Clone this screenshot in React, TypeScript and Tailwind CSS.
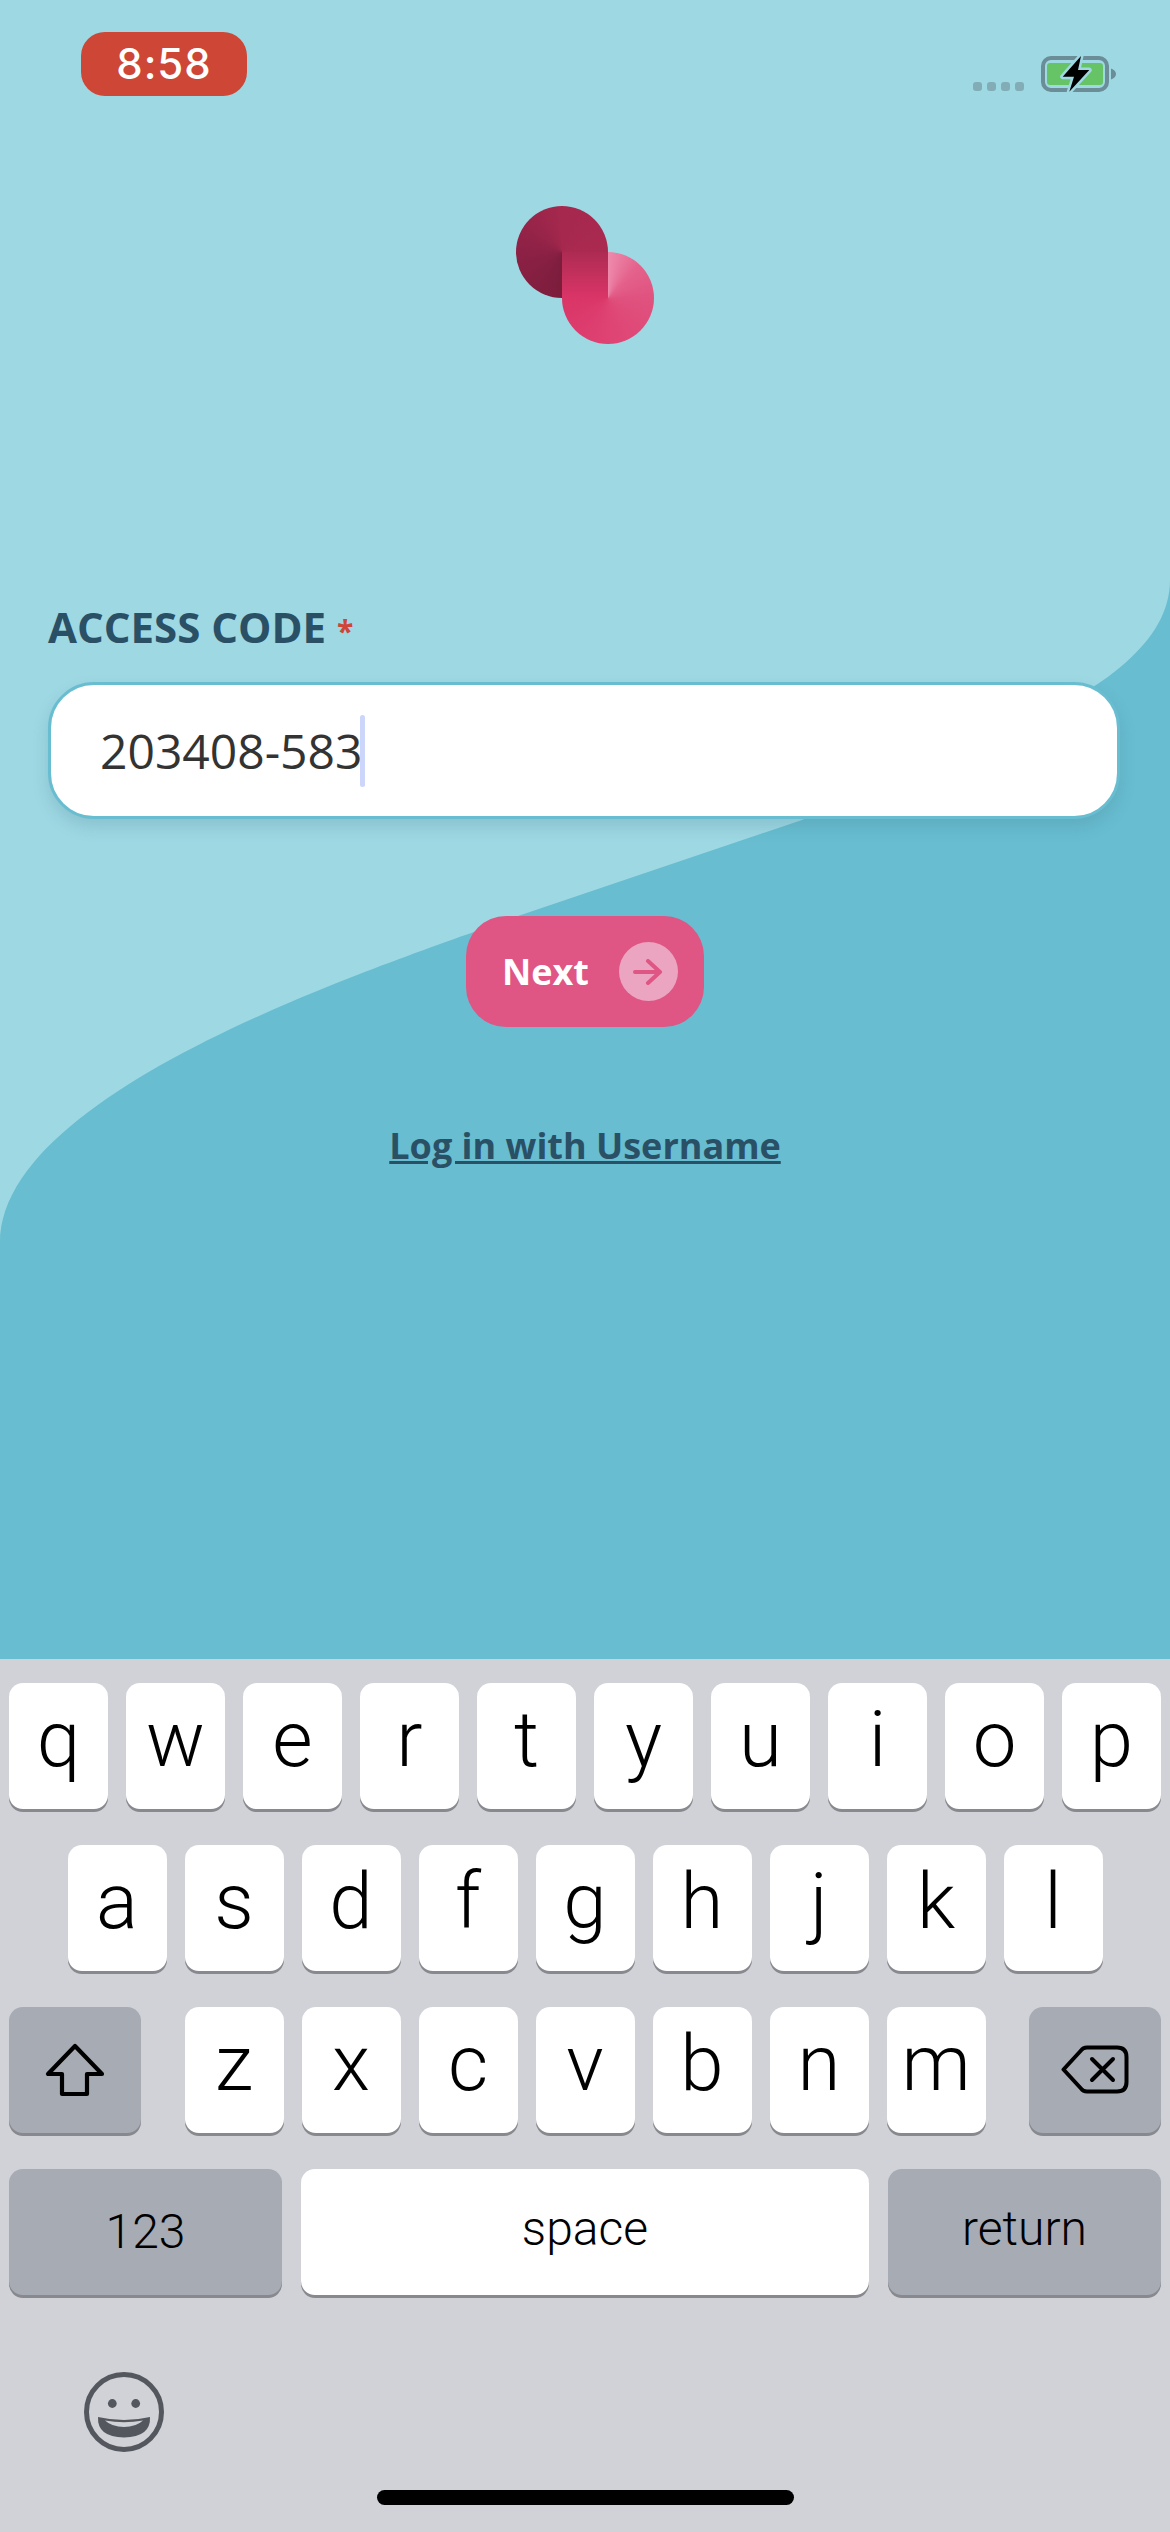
const ROW_1 = ['q', 'w', 'e', 'r', 't', 'y', 'u', 'i', 'o', 'p'];
const ROW_2 = ['a', 's', 'd', 'f', 'g', 'h', 'j', 'k', 'l'];
const ROW_3 = ['z', 'x', 'c', 'v', 'b', 'n', 'm'];

function Logo() {
  return (
    <svg width="138" height="138" viewBox="0 0 138 138">
      <defs>
        <clipPath id="left-disc">
          <circle cx="46" cy="46" r="46" />
        </clipPath>
        <clipPath id="right-disc">
          <circle cx="92" cy="92" r="46" />
        </clipPath>
        <linearGradient id="band" x1="0" y1="0" x2="0" y2="1">
          <stop offset="0" stopColor="#ad2b52" />
          <stop offset="1" stopColor="#db3568" />
        </linearGradient>
      </defs>
      <g clipPath="url(#left-disc)">
        <foreignObject x="0" y="0" width="92" height="92">
          <div className="h-[92px] w-[92px] bg-[conic-gradient(from_180deg,#7c1d3c,#8c2145_25%,#a6284e_50%,#ae2b52_100%)]" />
        </foreignObject>
      </g>
      <g clipPath="url(#right-disc)">
        <foreignObject x="46" y="46" width="92" height="92">
          <div className="h-[92px] w-[92px] bg-[conic-gradient(#ee8aac,#e4628c_12%,#e0527f_25%,#de4373_50%,#da3567_75%,#da3567_100%)]" />
        </foreignObject>
      </g>
      <path d="M46 46H92V92H46Z" fill="url(#band)" />
    </svg>
  );
}

function Battery() {
  return (
    <svg width="76" height="40" viewBox="0 0 76 40">
      <rect x="2" y="4" width="64" height="32" rx="8" fill="none" stroke="#6a8d98" strokeWidth="4" />
      <rect x="6" y="9" width="56" height="22" rx="3" fill="#66c466" />
      <path d="M70 14.5C73 15.5 75 17.5 75 20C75 22.5 73 24.5 70 25.5Z" fill="#6a8d98" />
      <path
        d="M40 2L21.7 22.7H33L28.3 37.7L48.3 16H37Z"
        fill="#000"
        stroke="#9ed8e3"
        strokeWidth="5"
        strokeLinejoin="round"
        paintOrder="stroke"
      />
    </svg>
  );
}

function Key({ label }: { label: string }) {
  return (
    <div className="flex h-[126px] w-[99px] items-center justify-center rounded-[14px] bg-white pb-[12px] font-['Roboto',sans-serif] text-[78px] font-[350] leading-none text-black shadow-[0_3px_0_#88898e]">
      {label}
    </div>
  );
}

function ShiftIcon() {
  return (
    <svg width="60" height="54" viewBox="0 0 60 54" fill="none" stroke="#000" strokeWidth="4.2" strokeLinejoin="round">
      <path d="M30 3L3 31H17V51H42V31H57Z" />
    </svg>
  );
}

function DeleteIcon() {
  return (
    <svg width="68" height="50" viewBox="0 0 68 50" fill="none" stroke="#000" strokeWidth="4" strokeLinecap="round" strokeLinejoin="round">
      <path d="M2.5 24.5L20 5.5Q22 2.5 26 2.5H56Q65.5 2.5 65.5 12V37Q65.5 46.5 56 46.5H26Q22 46.5 20 43.5Z" />
      <path d="M31 14L52 35M52 14L31 35" />
    </svg>
  );
}

function EmojiIcon() {
  return (
    <svg width="80" height="80" viewBox="0 0 80 80">
      <circle cx="40" cy="40" r="37.5" fill="none" stroke="#55575e" strokeWidth="5" />
      <circle cx="28.3" cy="31.5" r="4.4" fill="#55575e" />
      <circle cx="51.7" cy="31.5" r="4.4" fill="#55575e" />
      <path d="M14 45Q40 51 66 45Q67 65 40 65.5Q13 65 14 45Z" fill="#55575e" />
      <path d="M21 48.5Q40 52 59 48.5Q52 55 40 55Q28 55 21 48.5Z" fill="#d0d2d8" />
    </svg>
  );
}

function Keyboard() {
  return (
    <div className="flex h-[873px] flex-col bg-[#d0d2d8] pt-[24px]">
      <div className="flex flex-col gap-[36px]">
        <div className="flex justify-center gap-[18px]">
          {ROW_1.map((k) => (
            <Key key={k} label={k} />
          ))}
        </div>
        <div className="flex justify-center gap-[18px]">
          {ROW_2.map((k) => (
            <Key key={k} label={k} />
          ))}
        </div>
        <div className="flex justify-between px-[9px]">
          <div className="flex h-[126px] w-[132px] items-center justify-center rounded-[14px] bg-[#a7abb3] shadow-[0_3px_0_#88898e]">
            <ShiftIcon />
          </div>
          <div className="flex gap-[18px]">
            {ROW_3.map((k) => (
              <Key key={k} label={k} />
            ))}
          </div>
          <div className="flex h-[126px] w-[132px] items-center justify-center rounded-[14px] bg-[#a7abb3] shadow-[0_3px_0_#88898e]">
            <DeleteIcon />
          </div>
        </div>
        <div className="flex justify-between px-[9px] font-['Roboto',sans-serif] text-[48px] font-[350] leading-none text-black">
          <div className="flex h-[126px] w-[273px] items-center justify-center rounded-[14px] bg-[#a7abb3] shadow-[0_3px_0_#88898e]">
            123
          </div>
          <div className="flex h-[126px] w-[568px] items-center justify-center rounded-[14px] bg-white pb-[6px] shadow-[0_3px_0_#88898e]">
            space
          </div>
          <div className="flex h-[126px] w-[273px] items-center justify-center rounded-[14px] bg-[#a7abb3] pb-[6px] shadow-[0_3px_0_#88898e]">
            return
          </div>
        </div>
      </div>
      <div className="mt-[77px] pl-[84px]">
        <EmojiIcon />
      </div>
      <div className="mt-[38px] flex justify-center">
        <div className="h-[15px] w-[417px] rounded-full bg-black" />
      </div>
    </div>
  );
}

export default function App() {
  return (
    <div className="flex h-[2532px] w-[1170px] flex-col overflow-hidden bg-[#9ed8e3] font-['Open_Sans',sans-serif]">
      <div className="relative h-[1659px]">
        <svg className="absolute inset-0" width="1170" height="1659" viewBox="0 0 1170 1659">
          <path
            d="M1170 580C1170 690 960 750 802 820L518 916C400 960 0 1085 0 1243V1659H1170Z"
            fill="#68bdd0"
          />
        </svg>

        <div className="relative flex flex-col">
          <div className="flex items-start justify-between pt-[32px] pl-[81px] pr-[53px]">
            <div className="flex h-[64px] w-[166px] items-center justify-center rounded-[24px] bg-[#cd4636] font-['Inter',sans-serif] text-[42px] font-medium leading-none tracking-[1px] text-white">
              8:58
            </div>
            <div className="flex items-end gap-[17px] pt-[22px]">
              <div className="mb-[3px] flex gap-[5px]">
                <div className="h-[9px] w-[9px] rounded-[3px] bg-[#82adb7]" />
                <div className="h-[9px] w-[9px] rounded-[3px] bg-[#82adb7]" />
                <div className="h-[9px] w-[9px] rounded-[3px] bg-[#82adb7]" />
                <div className="h-[9px] w-[9px] rounded-[3px] bg-[#82adb7]" />
              </div>
              <Battery />
            </div>
          </div>

          <div className="mt-[110px] flex justify-center">
            <Logo />
          </div>

          <div className="mt-[256px] flex h-[54px] items-center pl-[48px] text-[42px] font-bold leading-none text-[#2a5066]">
            ACCESS CODE
            <span className="ml-[11px] mt-[8px] text-[30px] text-[#cd4636]">*</span>
          </div>

          <div className="mx-[48px] mt-[28px] flex h-[137px] w-[1072px] items-center rounded-[46px] border-[3px] border-[#68bdd0] bg-white pl-[49px] text-[48px] text-[#333] shadow-[0_8px_16px_rgba(60,110,130,0.2)]">
            203408-583
            <div className="-ml-[2px] h-[72px] w-[5px] rounded-full bg-[#ccd5fa]" />
          </div>

          <div className="mt-[97px] flex justify-center">
            <div className="flex h-[111px] w-[238px] items-center rounded-[40px] bg-[#df5583] pl-[36px] text-[36px] font-bold leading-none text-white">
              Next
              <div className="ml-[30px] flex h-[59px] w-[59px] items-center justify-center rounded-full bg-[#eca5c0]">
                <svg width="30" height="26" viewBox="0 0 30 26" fill="none" stroke="#df5583" strokeWidth="4" strokeLinecap="round" strokeLinejoin="round">
                  <path d="M2 13H27M15 2L27 13L15 24" />
                </svg>
              </div>
            </div>
          </div>

          <div className="mt-[101px] text-center text-[36px] font-bold leading-none text-[#2a5066] underline">
            Log in with Username
          </div>
        </div>
      </div>
      <Keyboard />
    </div>
  );
}
